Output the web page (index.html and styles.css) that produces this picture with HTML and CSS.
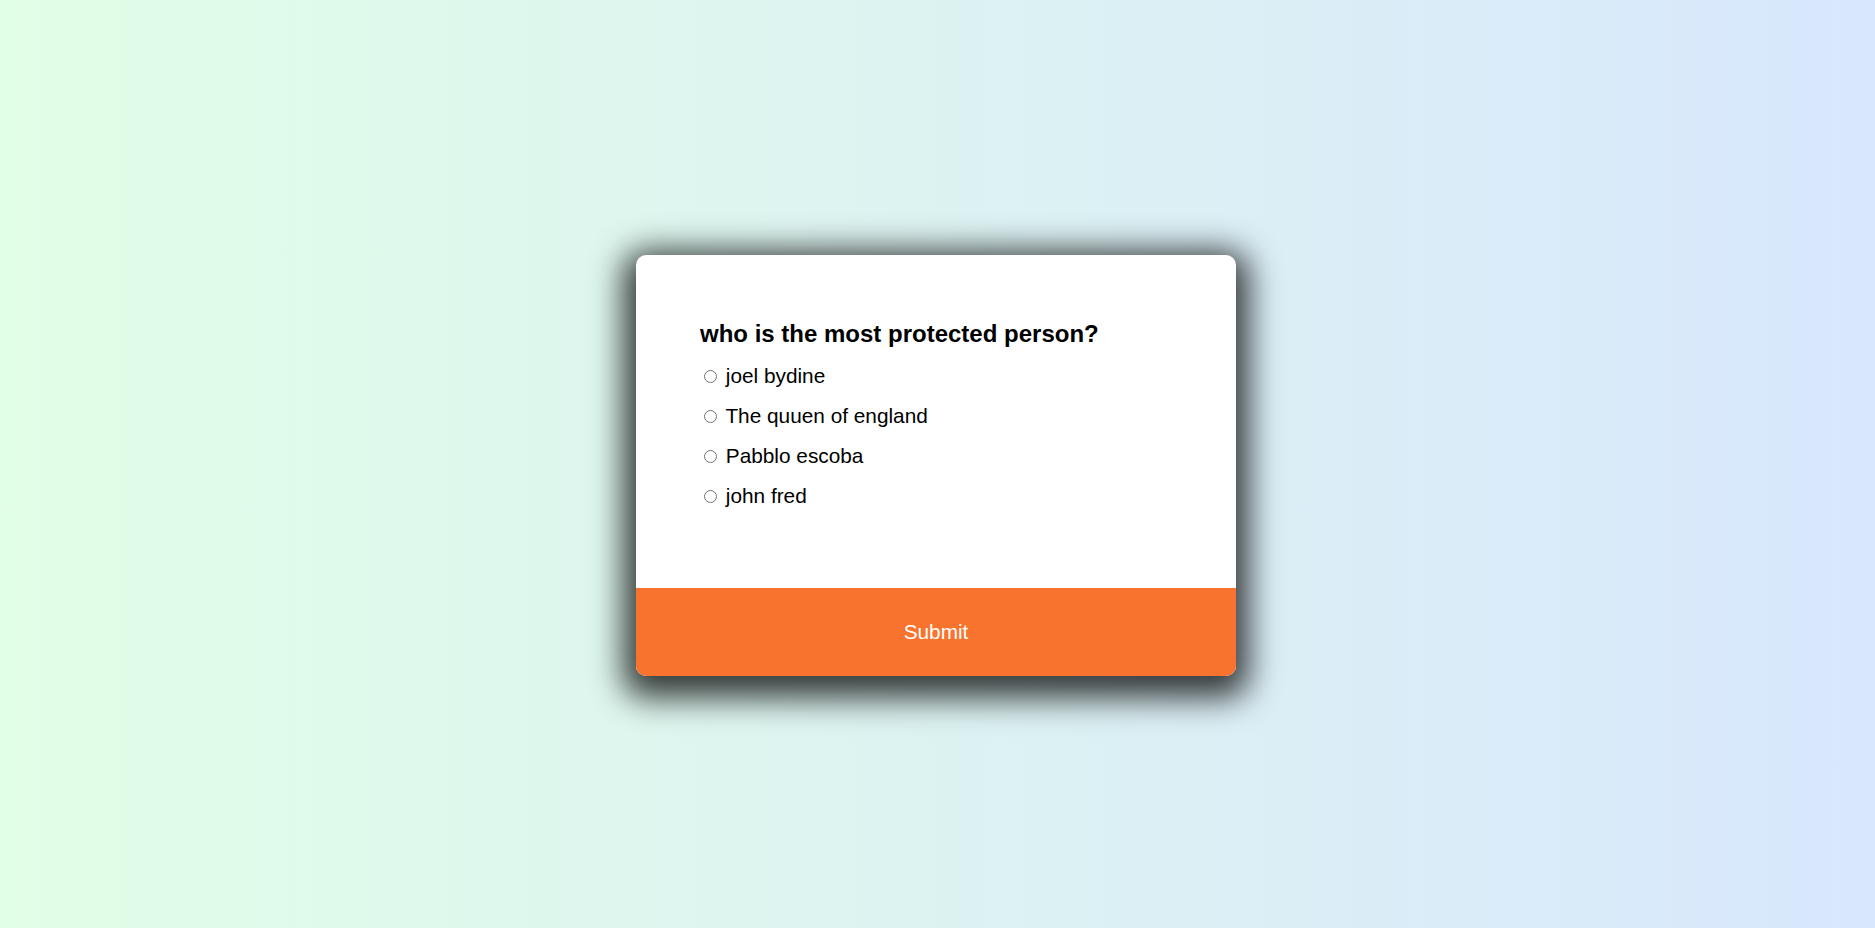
FILE: index.html
```html
<!DOCTYPE html>
<html lang="en">
<head>
<meta charset="UTF-8">
<title>Quiz</title>
<link rel="stylesheet" href="styles.css">
</head>
<body>
<div class="quiz-container">
  <div class="quiz-header">
    <h2 class="question">who is the most protected person?</h2>
    <ul class="answers">
      <li><input type="radio" name="answer" id="a"> <label for="a">joel bydine</label></li>
      <li><input type="radio" name="answer" id="b"> <label for="b">The quuen of england</label></li>
      <li><input type="radio" name="answer" id="c"> <label for="c">Pabblo escoba</label></li>
      <li><input type="radio" name="answer" id="d"> <label for="d">john fred</label></li>
    </ul>
  </div>
  <button class="submit">Submit</button>
</div>
</body>
</html>
```

FILE: styles.css
```css
* {
  box-sizing: border-box;
}

body {
  margin: 0;
  padding: 2px 3px 0 0;
  height: 100vh;
  display: flex;
  align-items: center;
  justify-content: center;
  font-family: "Liberation Sans", Arial, sans-serif;
  background: linear-gradient(to right, #e1fee7, #d8e7fd);
  overflow: hidden;
}

.quiz-container {
  width: 600px;
  background: #fff;
  border-radius: 10px;
  overflow: hidden;
  box-shadow: 0 9px 32px 13px rgba(0, 0, 0, 0.76);
}

.quiz-header {
  padding: 65px 64px 64px;
}

.question {
  margin: 0;
  font-size: 24px;
  font-weight: bold;
  color: #000;
}

.answers {
  list-style: none;
  padding: 0;
  margin: 15px 0 16px;
}

.answers li {
  font-size: 20.8px;
  line-height: 24px;
  margin: 16px 0;
  color: #000;
}

.answers input {
  margin: 3px 3px 0 4px;
}

.answers label {
  cursor: pointer;
}

.submit {
  display: block;
  width: 100%;
  border: none;
  background: #f8732d;
  color: #fff;
  font-family: "Liberation Sans", Arial, sans-serif;
  font-size: 20.8px;
  line-height: 24px;
  padding: 32px;
  cursor: pointer;
}
```
